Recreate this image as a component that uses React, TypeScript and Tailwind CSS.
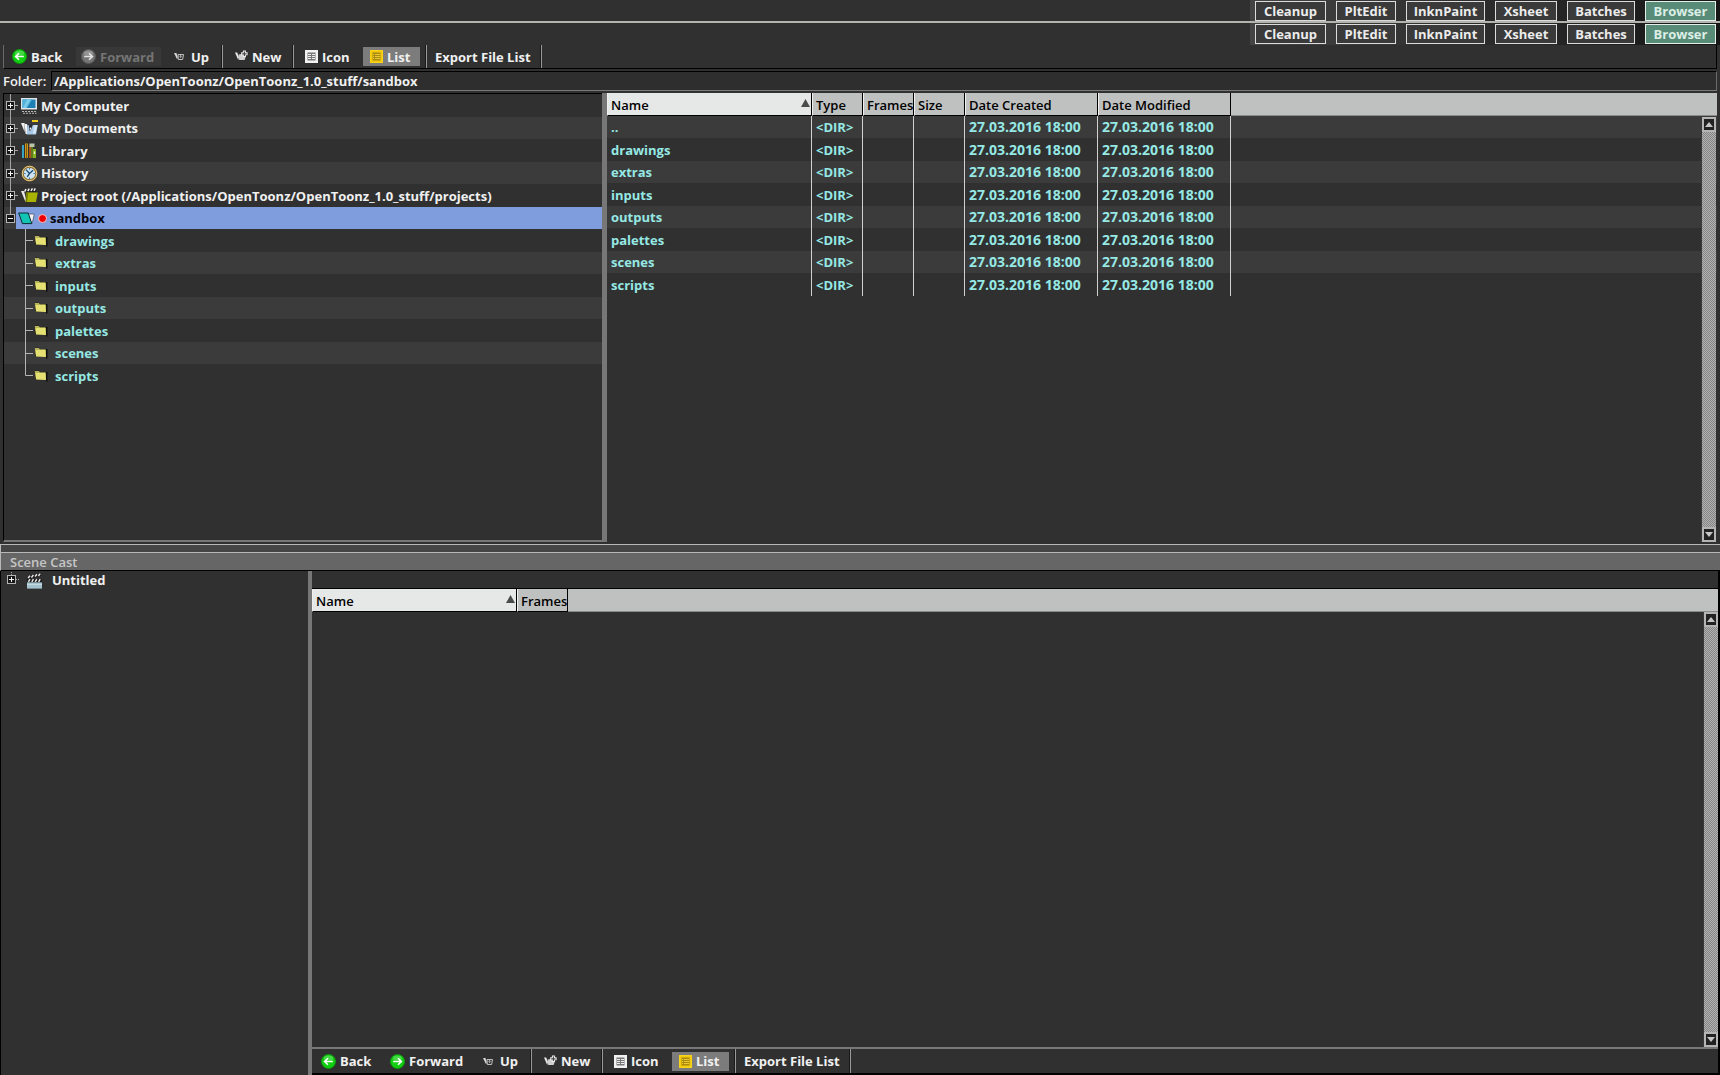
import React from "react";

type Tone = "green" | "gray";

const tabs = [
  { label: "Cleanup", width: "w-[71px]" },
  { label: "PltEdit", width: "w-[60px]" },
  { label: "InknPaint", width: "w-[79px]" },
  { label: "Xsheet", width: "w-[62px]" },
  { label: "Batches", width: "w-[68px]" },
  { label: "Browser", width: "w-[71px]" },
];

const folders = ["drawings", "extras", "inputs", "outputs", "palettes", "scenes", "scripts"];

/* ---------- icons ---------- */

function ArrowIcon({ tone, flip }: { tone: Tone; flip?: boolean }) {
  const fill = tone === "green" ? "#12cf12" : "#757575";
  const edge = tone === "green" ? "#0a9a0a" : "#555555";
  return (
    <svg width="15" height="15" viewBox="0 0 15 15" className="shrink-0" aria-hidden="true">
      <circle cx="7.5" cy="7.5" r="7" fill={fill} stroke={edge} strokeWidth="1" />
      <ellipse cx="7.5" cy="4" rx="4.6" ry="2.6" fill="#ffffff" opacity="0.22" />
      <path
        d={flip ? "M3.2 7.5H11M8 4.2L11.4 7.5L8 10.8" : "M11.8 7.5H4M7 4.2L3.6 7.5L7 10.8"}
        fill="none"
        stroke={tone === "green" ? "#ffffff" : "#e4e4e4"}
        strokeWidth="1.6"
      />
    </svg>
  );
}

function UpIcon() {
  return (
    <svg width="13" height="13" viewBox="0 0 13 13" className="shrink-0" aria-hidden="true">
      <path d="M0 3H2.4L3.8 7L3.2 9.4Z" fill="#d8d8d8" />
      <path d="M4 4.5H9.6L8.6 9.5H4.4Z" fill="#3a3a3a" stroke="#bdbdbd" />
      <path d="M6.6 8V5.6M5.6 6.6L6.6 5.4L7.6 6.6" stroke="#c8c8c8" strokeWidth="0.8" fill="none" />
    </svg>
  );
}

function NewIcon() {
  return (
    <svg width="13" height="13" viewBox="0 0 13 13" className="shrink-0" aria-hidden="true">
      <path d="M0 2.5H2.2L4 7L3.2 10Z" fill="#e6e6e6" />
      <path d="M3.6 4.5L7 4L10.8 6.5L9.6 10H4.2Z" fill="#d0d0d0" />
      <path d="M9.4 0.6V7M6.2 3.8H12.6" stroke="#f0f0f0" strokeWidth="3" />
      <path d="M9.4 1.6V6M7.2 3.8H11.6" stroke="#4a4a4a" strokeWidth="1.2" />
    </svg>
  );
}

function GridIcon() {
  return (
    <svg width="13" height="13" viewBox="0 0 13 13" className="shrink-0" aria-hidden="true">
      <rect x="0" y="0" width="13" height="13" fill="#f2f2f2" />
      <rect x="2.5" y="2.5" width="8" height="8" fill="#777777" />
      <path d="M3 4.5H6M7 4.5H10M3 6.5H6M7 6.5H10M3 8.5H6M7 8.5H10" stroke="#efefef" strokeWidth="1.1" />
    </svg>
  );
}

function ListIcon() {
  return (
    <svg width="13" height="13" viewBox="0 0 13 13" className="shrink-0" aria-hidden="true">
      <rect x="0.5" y="0.5" width="12" height="12" fill="#f2c90c" stroke="#f7d417" />
      <rect x="2.5" y="2.5" width="8" height="8" fill="#a88a10" />
      <path d="M5 4.5H10M5 6.5H10M5 8.5H10" stroke="#f2d03a" strokeWidth="0.9" />
      <path d="M3.6 4V9.5" stroke="#f2d03a" strokeWidth="1" strokeDasharray="1 1" />
    </svg>
  );
}

function ComputerIcon() {
  return (
    <svg width="16" height="16" viewBox="0 0 16 16" className="shrink-0" aria-hidden="true">
      <rect x="0" y="0" width="16" height="11.5" fill="#e2e6ea" />
      <rect x="1.5" y="1.5" width="13" height="8.5" fill="#1d7fb4" />
      <path d="M1.5 1.5H11L6 10H1.5Z" fill="#4fb4dc" />
      <path d="M6 1.5H9.5L5 10H2Z" fill="#8fd4ee" opacity="0.7" />
      <path d="M1 13.5H15M2 15.2H15.5" stroke="#b8b8b8" strokeWidth="1.1" strokeDasharray="2 1" />
    </svg>
  );
}

function DocumentsIcon() {
  return (
    <svg width="17" height="17" viewBox="0 0 17 17" className="shrink-0" aria-hidden="true">
      <rect x="11" y="0" width="6" height="2" fill="#f2cf1c" />
      <path d="M0 3H3.6V12Z" fill="#eeeeee" />
      <path d="M3.6 4H6L7 14H4.6Z" fill="#f7f7f7" />
      <path d="M6.4 5H16.8L15 14.4H5.8Z" fill="#a9c8e6" />
      <path d="M7.6 4.6H12L10 10L8.6 11Z" fill="#27303a" />
      <path d="M8.4 9L10 7L10.4 10Z" fill="#f7f7f7" />
      <path d="M13 5.5L16.4 5.2L14.6 13.6H12Z" fill="#d4e6f6" />
    </svg>
  );
}

function LibraryIcon() {
  return (
    <svg width="16" height="16" viewBox="0 0 16 16" className="shrink-0" aria-hidden="true">
      <rect x="1" y="2" width="2" height="13" fill="#39a3c4" />
      <rect x="4" y="0.5" width="3" height="14.5" fill="#c9961a" />
      <rect x="5" y="0.5" width="1" height="14.5" fill="#7c5a10" />
      <rect x="8" y="2" width="2" height="13" fill="#a8521c" />
      <rect x="10" y="3" width="2" height="12" fill="#5f7a1c" />
      <rect x="8.5" y="0.5" width="5" height="3.5" fill="#b9c4a8" />
      <rect x="12" y="6" width="3" height="9" fill="#86b322" />
      <rect x="12.8" y="8.5" width="1.4" height="2.5" fill="#e8efc8" />
    </svg>
  );
}

function HistoryIcon() {
  return (
    <svg width="17" height="17" viewBox="0 0 17 17" className="shrink-0" aria-hidden="true">
      <circle cx="8.5" cy="8.5" r="8" fill="#8a6a28" />
      <circle cx="8.5" cy="8.5" r="7.2" fill="none" stroke="#e6cf8c" strokeWidth="1" />
      <circle cx="8.5" cy="8.5" r="5.8" fill="#cfe4f2" />
      <path d="M8.5 3V4.6M8.5 12.4V14M3 8.5H4.6M12.4 8.5H14" stroke="#3a78a8" strokeWidth="1.2" />
      <path d="M5 4.6L8.5 8.5L12 5.2M8.5 8.5L6.2 11.8" stroke="#1f4f74" strokeWidth="1.4" fill="none" />
    </svg>
  );
}

function ProjectRootIcon() {
  return (
    <svg width="17" height="16" viewBox="0 0 17 16" className="shrink-0" aria-hidden="true">
      <path d="M0 3H3L5.5 13L4.5 14Z" fill="#e8e8e8" />
      <path d="M2.6 4L15 1V4H3Z" fill="#1a1a1a" />
      <path d="M3.6 3.6L5 1M6.8 3.2L8.2 0.6M10 3L11.4 0.4M13 2.8L14.2 0.4" stroke="#f0f0f0" strokeWidth="1.5" />
      <path d="M5.4 4.4H16.8L15 14H4.5Z" fill="#a8b400" />
      <path d="M5.4 4.4H7.2L6 14H4.5Z" fill="#6f7800" />
    </svg>
  );
}

function SandboxIcon() {
  return (
    <svg width="17" height="13" viewBox="0 0 17 13" className="shrink-0" aria-hidden="true">
      <path d="M10 2H16.3L14.4 10.6H12Z" fill="#f4f4f4" stroke="#4b5a78" strokeWidth="0.8" />
      <path d="M0.7 1H10.2L13.8 11.6H4.4Z" fill="#12c4b4" stroke="#0c2a30" strokeWidth="1" />
    </svg>
  );
}

function FolderIcon() {
  return (
    <svg width="14" height="12" viewBox="0 0 14 12" className="shrink-0" aria-hidden="true">
      <path d="M1 0.8H5L6 2H13.5V11.5H12V10L1 9Z" fill="#0f0f0a" />
      <path d="M0.8 1H4.8L6 2.2H11.6V9.6L2 9Z" fill="#b8b45a" />
      <path d="M1.4 3H11.6L12 10L2 9.4Z" fill="#e4e072" />
    </svg>
  );
}

function ClapperIcon() {
  return (
    <svg width="17" height="17" viewBox="0 0 17 17" className="shrink-0" aria-hidden="true">
      <path d="M1 4.4L14.8 1.2L15.4 3.8L1.6 7Z" fill="#1a1a1a" />
      <path d="M2 6L4 3.8M5.4 5.4L7.4 3M9 4.6L11 2.2M12.4 4L14.2 1.6" stroke="#e8e8e8" strokeWidth="1.5" />
      <rect x="1" y="7" width="15" height="3" fill="#1a1a1a" />
      <path d="M2.4 9.8L4 7.2M5.8 9.8L7.4 7.2M9.2 9.8L10.8 7.2M12.6 9.8L14.2 7.2" stroke="#e8e8e8" strokeWidth="1.5" />
      <rect x="1" y="10.4" width="15" height="6.2" fill="#a4c2ce" />
      <path d="M1 12.4H16" stroke="#c8dde6" strokeWidth="1" />
    </svg>
  );
}

function Expander({ open, last }: { open?: boolean; last?: boolean }) {
  return (
    <svg width="12" height="23" viewBox="0 0 12 23" className="shrink-0" aria-hidden="true">
      <path d={last ? "M4.5 0V8" : "M4.5 0V23"} stroke="#a4a4a4" />
      {!open && <path d="M9 11.5H12" stroke="#a4a4a4" />}
      <rect x="0.5" y="7.5" width="8" height="8" fill="#161616" stroke="#b4b4b4" />
      <path d={open ? "M2 11.5H7" : "M2 11.5H7M4.5 9V14"} stroke="#f4f4f4" />
    </svg>
  );
}

/* ---------- shared parts ---------- */

function TabStrip({ className }: { className: string }) {
  return (
    <nav className={"flex justify-end " + className}>
      <div className="flex items-center gap-[10px] bg-linear-to-r from-[#444444] to-[#161616] pr-1 pl-[5px]">
        {tabs.map((t) => (
          <button
            key={t.label}
            className={
              "h-5 border text-center leading-[18px] " +
              t.width +
              (t.label === "Browser"
                ? " border-[#e4efe9] bg-[#588c78] text-[#dcefe6]"
                : " border-[#dcdcdc] bg-[#3a3a3a] text-[#ececec]")
            }
          >
            {t.label}
          </button>
        ))}
      </div>
    </nav>
  );
}

function Separator({ className }: { className: string }) {
  return <span className={"w-[2px] shrink-0 self-stretch border-l border-[#191919] bg-[#999999] " + className} />;
}

function Toolbar({ canForward }: { canForward?: boolean }) {
  const base = "flex h-[19px] shrink-0 items-center gap-1 whitespace-nowrap ";
  return (
    <div className="flex items-center text-[#f0f0f0]">
      <button className={base + "ml-[3px] w-[66px] px-[5px]"}>
        <ArrowIcon tone="green" />
        Back
      </button>
      <button
        disabled={!canForward}
        className={base + "ml-[3px] w-[85px] px-[5px] " + (canForward ? "" : "bg-[#383838] text-[#757575]")}
      >
        <ArrowIcon tone={canForward ? "green" : "gray"} flip />
        Forward
      </button>
      <button className={base + "ml-2 w-[46px] px-[5px]"}>
        <UpIcon />
        Up
      </button>
      <Separator className="ml-[6px]" />
      <button className={base + "ml-[7px] w-[58px] px-[5px]"}>
        <NewIcon />
        New
      </button>
      <Separator className="ml-1" />
      <button className={base + "ml-[6px] w-[56px] px-[5px]"}>
        <GridIcon />
        Icon
      </button>
      <button className={base + "ml-[7px] w-[57px] bg-[#7c7c7c] px-[7px]"}>
        <ListIcon />
        List
      </button>
      <Separator className="ml-[5px]" />
      <button className={base + "ml-1 w-[105px] px-[4px]"}>Export File List</button>
      <Separator className="ml-1" />
    </div>
  );
}

function ScrollButton({ down }: { down?: boolean }) {
  return (
    <button
      aria-label={down ? "Scroll down" : "Scroll up"}
      className="flex h-[15px] w-full items-center justify-center border-2 border-[#b4b4b4] bg-[#222222]"
    >
      <svg width="8" height="5" viewBox="0 0 8 5" aria-hidden="true">
        <path d={down ? "M0 0H8L4 5Z" : "M0 5H8L4 0Z"} fill="#c6c6c6" />
      </svg>
    </button>
  );
}

function ScrollBar({ className }: { className: string }) {
  return (
    <div
      className={
        "absolute flex w-[15px] flex-col justify-between border-l border-[#3a3a3a] bg-[conic-gradient(#858585_25%,#b2b2b2_0_50%,#858585_0_75%,#b2b2b2_0)] bg-[length:2px_2px] " +
        className
      }
    >
      <ScrollButton />
      <ScrollButton down />
    </div>
  );
}

function SortMark() {
  return (
    <svg width="9" height="8" viewBox="0 0 9 8" className="mb-1 shrink-0" aria-hidden="true">
      <path d="M0 8H9L4.5 0Z" fill="#4a4a4a" />
    </svg>
  );
}

const th =
  "h-[23px] border-r border-b border-black border-l border-l-[#f0f0f0] bg-[#bfc1c0] pt-px pl-[3px] text-left font-semibold ";

function NameHeader({ width }: { width: string }) {
  return (
    <th className={th + width + " !bg-[#e6e8e7]"}>
      <div className="flex items-center justify-between pr-px">
        Name
        <SortMark />
      </div>
    </th>
  );
}

/* ---------- file browser ---------- */

function TreeRow({
  icon,
  label,
  striped,
  tall,
}: {
  icon: React.ReactNode;
  label: string;
  striped?: boolean;
  tall?: boolean;
}) {
  return (
    <li
      className={
        "flex items-center overflow-hidden pl-[2px] whitespace-nowrap text-[#f0f0f0] " +
        (tall ? "h-[23px] " : "h-[22px] ") +
        (striped ? "bg-[#3b3b3b]" : "")
      }
    >
      <Expander />
      <span className="ml-[3px] flex w-5 shrink-0">{icon}</span>
      {label}
    </li>
  );
}

function FolderTree() {
  return (
    <ul className="w-[599px] shrink-0 overflow-hidden border-t border-b-2 border-l border-t-black border-b-[#777777] border-l-black">
      <TreeRow icon={<ComputerIcon />} label="My Computer" tall />
      <TreeRow icon={<DocumentsIcon />} label="My Documents" striped />
      <TreeRow icon={<LibraryIcon />} label="Library" tall />
      <TreeRow icon={<HistoryIcon />} label="History" striped />
      <TreeRow
        icon={<ProjectRootIcon />}
        label="Project root (/Applications/OpenToonz/OpenToonz_1.0_stuff/projects)"
        tall
      />
      <li>
        <div className="flex h-[22px] items-center overflow-hidden bg-[#3b3b3b] pl-[2px]">
          <span className="flex w-[10px] shrink-0">
            <Expander open last />
          </span>
          <span className="flex h-full flex-1 items-center bg-[#7f9ddc] pl-[2px] text-[#04040c]">
            <SandboxIcon />
            <span className="mr-[3px] ml-[3px] size-[9px] rounded-full border border-[#f6c8c8] bg-[#ee0000]" />
            sandbox
          </span>
        </div>
        <ul>
          {folders.map((name, i) => (
            <li
              key={name}
              className={
                "flex items-center overflow-hidden pl-[21px] text-[#96e8e4] " +
                (i % 2 ? "h-[22px] bg-[#3b3b3b]" : "h-[23px]")
              }
            >
              <svg width="9" height="23" viewBox="0 0 9 23" className="shrink-0" aria-hidden="true">
                <path d={i === folders.length - 1 ? "M0.5 0V11.5H8" : "M0.5 0V23M0.5 11.5H8"} fill="none" stroke="#b4b4b4" />
              </svg>
              <span className="flex w-[21px] shrink-0">
                <FolderIcon />
              </span>
              {name}
            </li>
          ))}
        </ul>
      </li>
    </ul>
  );
}

function FileTable() {
  const cell = "border-r border-[#d0d0d0] pl-1 ";
  return (
    <div className="relative mr-[3px] min-w-0 flex-1">
      <table className="w-full table-fixed border-separate border-spacing-0">
        <thead>
          <tr className="text-black">
            <NameHeader width="w-[205px]" />
            <th className={th + "w-[51px]"}>Type</th>
            <th className={th + "w-[51px]"}>Frames</th>
            <th className={th + "w-[51px]"}>Size</th>
            <th className={th + "w-[133px]"}>Date Created</th>
            <th className={th + "w-[133px]"}>Date Modified</th>
            <th className="h-[23px] border-b border-[#8a8a8a] bg-[#bfc1c0]" aria-label="Empty" />
          </tr>
        </thead>
        <tbody className="text-[#96e8e4]">
          {["..", ...folders].map((name, i) => (
            <tr key={name} className={i % 2 ? "h-[23px]" : "h-[22px] bg-[#3b3b3b]"}>
              <td className={cell}>{name}</td>
              <td className={cell}>&lt;DIR&gt;</td>
              <td className={cell} />
              <td className={cell} />
              <td className={cell + "text-[14px]"}>27.03.2016 18:00</td>
              <td className={cell + "text-[14px]"}>27.03.2016 18:00</td>
              <td />
            </tr>
          ))}
        </tbody>
      </table>
      <ScrollBar className="top-6 right-px bottom-0" />
    </div>
  );
}

/* ---------- scene cast ---------- */

function SceneCast() {
  return (
    <section className="flex min-h-0 grow-[503] basis-0 border-r-2 border-l border-black">
      <ul className="w-[307px] shrink-0">
        <li className="flex h-[18px] items-center pl-[6px] text-[#f0f0f0]">
          <svg width="12" height="20" viewBox="0 0 12 20" className="shrink-0" aria-hidden="true">
            <path d="M4.5 2V5M9 9.5H12" stroke="#a4a4a4" strokeDasharray="1 1" />
            <rect x="0.5" y="5.5" width="8" height="8" fill="#161616" stroke="#b4b4b4" />
            <path d="M2 9.5H7M4.5 7V12" stroke="#f4f4f4" />
          </svg>
          <span className="ml-[7px] flex w-[26px] shrink-0">
            <ClapperIcon />
          </span>
          Untitled
        </li>
      </ul>
      <div className="w-1 shrink-0 bg-[#777777]" />
      <div className="flex min-w-0 flex-1 flex-col">
        <div className="h-[18px] shrink-0 border-b border-black" />
        <div className="relative min-h-0 flex-1">
          <table className="w-full table-fixed border-separate border-spacing-0">
            <thead>
              <tr className="text-black">
                <NameHeader width="w-[205px]" />
                <th className={th + "w-[51px]"}>Frames</th>
                <th className="h-[23px] border-b border-[#8a8a8a] bg-[#bfc1c0]" aria-label="Empty" />
              </tr>
            </thead>
          </table>
          <ScrollBar className="top-[23px] right-0 bottom-0" />
        </div>
        <div className="flex h-[28px] shrink-0 border-t-2 border-b-2 border-t-[#777777] border-b-black pl-px">
          <Toolbar canForward />
        </div>
      </div>
    </section>
  );
}

export default function App() {
  return (
    <div className="flex h-screen cursor-default flex-col overflow-hidden bg-[#303030] font-['Open_Sans','Noto_Sans',sans-serif] text-[13px] leading-[18px] font-bold">
      <TabStrip className="h-[21px] shrink-0" />
      <div className="h-[2px] shrink-0 bg-[#b4b4ae]" />
      <div className="shrink-0">
        <TabStrip className="h-[22px]" />
        <div className="mr-[3px] ml-[3px] flex h-6 border-r border-b border-l border-r-black border-b-black border-l-[#6a6a6a]">
          <Toolbar />
        </div>
        <div className="mt-[2px] flex h-[22px] pr-[3px] pl-[3px]">
          <label htmlFor="folder" className="w-12 shrink-0 leading-[20px] font-semibold text-[#f0f0f0]">
            Folder:
          </label>
          <input
            id="folder"
            defaultValue="/Applications/OpenToonz/OpenToonz_1.0_stuff/sandbox"
            className="h-[20px] min-w-0 flex-1 border border-t-black border-r-[#6b6b6b] border-b-[#7a7a7a] border-l-black bg-[#2e2e2e] pl-[2px] text-[#f0f0f0] outline-none"
          />
        </div>
      </div>
      <main className="flex min-h-0 grow-[449] basis-0 pl-[3px]">
        <FolderTree />
        <div className="w-[5px] shrink-0 bg-[#777777]" />
        <FileTable />
      </main>
      <div className="mt-[2px] h-[8px] shrink-0 border-t border-l border-[#b8b8b8] bg-[#454545]" />
      <header className="h-[19px] shrink-0 border-t border-b border-l border-t-[#b8b8b8] border-b-black border-l-[#b8b8b8] bg-[#666666] pl-[9px] font-semibold text-[#c6c6c6]">
        <h2>Scene Cast</h2>
      </header>
      <SceneCast />
    </div>
  );
}
